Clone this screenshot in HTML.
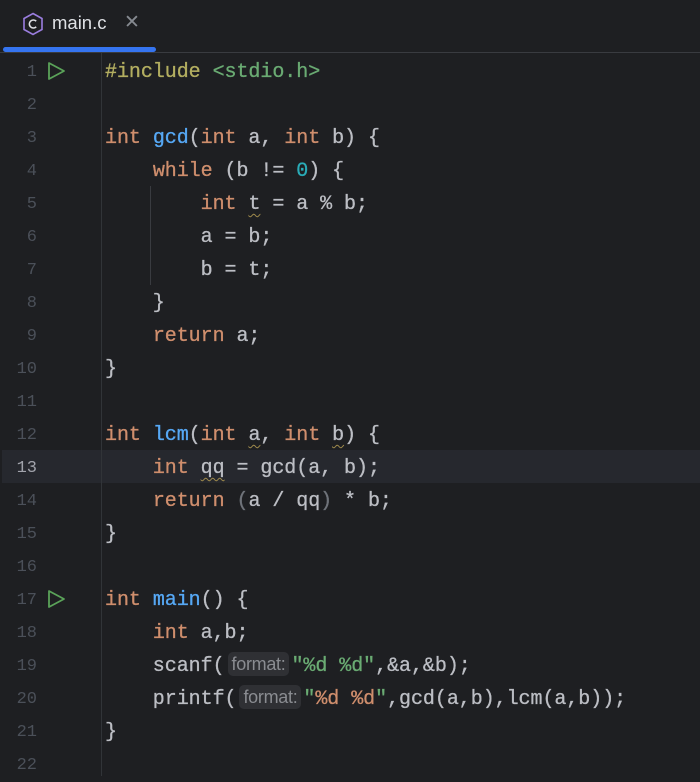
<!DOCTYPE html>
<html><head><style>
body{margin:0;width:700px;height:776px;background:#1e1f22;overflow:hidden;position:relative;font-family:"Liberation Mono",monospace;}
.tab{position:absolute;left:0;top:0;width:700px;height:52px;border-bottom:1px solid #393b40;background:#1e1f22}
.tabname{position:absolute;left:52px;top:12px;font:18.5px "Liberation Sans",sans-serif;color:#dfe1e5}
.x{position:absolute;left:124px;top:11px;font:19px "Liberation Sans",sans-serif;color:#868a91}
.ul{position:absolute;left:3px;top:47px;width:153px;height:5px;background:#3574f0;border-radius:3px}
.gut{position:absolute;left:101px;top:53px;width:1px;height:723px;background:#313438}
.hl{position:absolute;left:2px;top:450px;width:698px;height:33px;background:#26282e}
.ln{position:absolute;left:0;width:37px;text-align:right;font-size:17px;color:#4b5059;line-height:33px}
.c{position:absolute;left:105px;font-size:20px;color:#bcbec4;line-height:33px;white-space:pre;letter-spacing:-0.05px;-webkit-text-stroke:0.3px currentColor}
.k{color:#cf8e6d}.f{color:#56a8f5}.n{color:#2aacb8}.s{color:#6aab73}.p{color:#b3ae60}
.w{text-decoration:underline wavy #a08b4c;text-decoration-thickness:1px;text-underline-offset:4px}
.h{display:inline-block;font:18px "Liberation Sans",sans-serif;color:#8a8c91;background:#2f3034;border-radius:5px;padding:0 4px;line-height:24px;margin:0 2px 0 3px;vertical-align:1px;letter-spacing:-0.3px;-webkit-text-stroke:0}
.run{position:absolute;left:47px}
.guide{position:absolute;left:150px;top:186px;width:1px;height:99px;background:#393b40}
.t{position:absolute;top:2px;left:0;width:700px;height:776px}
</style></head><body>
<div class="tab">
<svg style="position:absolute;left:22px;top:12px" width="22" height="24" viewBox="0 0 22 24"><path d="M11 1.5 L20 6.5 V17.5 L11 22.5 L2 17.5 V6.5 Z" fill="none" stroke="#9b7ee0" stroke-width="1.6"/><path d="M14.2 9.2 A4 4 0 1 0 14.2 14.8" fill="none" stroke="#dfe1e5" stroke-width="1.6"/></svg>
<div class="tabname">main.c</div><div class="x">✕</div>
<div class="ul"></div></div>
<div class="hl"></div>
<div class="gut"></div>
<div class="guide"></div>
<svg class="run" style="top:61px" width="20" height="20" viewBox="0 0 20 20"><path d="M2 2 L17 10 L2 18 Z" fill="none" stroke="#5aa259" stroke-width="1.8" stroke-linejoin="round"/></svg>
<svg class="run" style="top:589px" width="20" height="20" viewBox="0 0 20 20"><path d="M2 2 L17 10 L2 18 Z" fill="none" stroke="#5aa259" stroke-width="1.8" stroke-linejoin="round"/></svg>
<div class="t">
<div class="ln" style="top:54px">1</div><div class="ln" style="top:87px">2</div><div class="ln" style="top:120px">3</div><div class="ln" style="top:153px">4</div><div class="ln" style="top:186px">5</div><div class="ln" style="top:219px">6</div><div class="ln" style="top:252px">7</div><div class="ln" style="top:285px">8</div><div class="ln" style="top:318px">9</div><div class="ln" style="top:351px">10</div><div class="ln" style="top:384px">11</div><div class="ln" style="top:417px">12</div><div class="ln" style="top:450px;color:#a1a3ab">13</div><div class="ln" style="top:483px">14</div><div class="ln" style="top:516px">15</div><div class="ln" style="top:549px">16</div><div class="ln" style="top:582px">17</div><div class="ln" style="top:615px">18</div><div class="ln" style="top:648px">19</div><div class="ln" style="top:681px">20</div><div class="ln" style="top:714px">21</div><div class="ln" style="top:747px">22</div>
<div class="c" style="top:54px"><span class="p">#include</span> <span class="s">&lt;stdio.h&gt;</span></div>
<div class="c" style="top:120px"><span class="k">int</span> <span class="f">gcd</span>(<span class="k">int</span> a, <span class="k">int</span> b) {</div>
<div class="c" style="top:153px">    <span class="k">while</span> (b != <span class="n">0</span>) {</div>
<div class="c" style="top:186px">        <span class="k">int</span> <span class="w">t</span> = a % b;</div>
<div class="c" style="top:219px">        a = b;</div>
<div class="c" style="top:252px">        b = t;</div>
<div class="c" style="top:285px">    }</div>
<div class="c" style="top:318px">    <span class="k">return</span> a;</div>
<div class="c" style="top:351px">}</div>
<div class="c" style="top:417px"><span class="k">int</span> <span class="f">lcm</span>(<span class="k">int</span> <span class="w">a</span>, <span class="k">int</span> <span class="w">b</span>) {</div>
<div class="c" style="top:450px">    <span class="k">int</span> <span class="w">qq</span> = gcd(a, b);</div>
<div class="c" style="top:483px">    <span class="k">return</span> <span style="color:#6f737a">(</span>a / qq<span style="color:#6f737a">)</span> * b;</div>
<div class="c" style="top:516px">}</div>
<div class="c" style="top:582px"><span class="k">int</span> <span class="f">main</span>() {</div>
<div class="c" style="top:615px">    <span class="k">int</span> a,b;</div>
<div class="c" style="top:648px">    scanf(<span class="h">format:</span><span class="s">"%d %d"</span>,&amp;a,&amp;b);</div>
<div class="c" style="top:681px">    printf(<span class="h">format:</span><span class="s">"<span class="k">%d</span> <span class="k">%d</span>"</span>,gcd(a,b),lcm(a,b));</div>
<div class="c" style="top:714px">}</div>
</div>
</body></html>
